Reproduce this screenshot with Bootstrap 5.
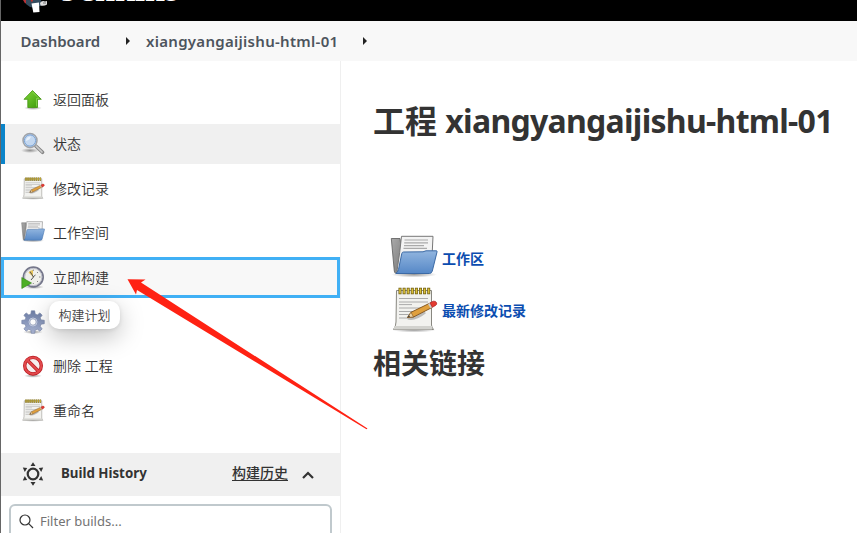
<!DOCTYPE html>
<html lang="zh-CN">
<head>
<meta charset="utf-8">
<meta name="viewport" content="width=device-width, initial-scale=1">
<title>xiangyangaijishu-html-01 [Jenkins]</title>
<link href="https://cdn.jsdelivr.net/npm/bootstrap@5.3.0/dist/css/bootstrap.min.css" rel="stylesheet">
<style>
body{font-family:"Noto Sans","Noto Sans CJK SC",sans-serif;font-size:14px;line-height:20px;color:#333;height:533px;border-left:1px solid #666;overflow:hidden}
.top-bar{height:21px;background:#000;overflow:hidden}
.top-bar .logo-pic{width:32px;height:21px;margin-left:16px}
.brand-word{font:bold 36px/36px "Liberation Serif",serif;color:#fff;margin:-29px 0 0 12px;height:36px;width:115px}
.crumbs{height:40px;background:#f8f8f8;font-weight:600;color:#4d545d;font-size:15px;padding-left:19.500px}
.crumb-a{width:81.500px}.crumb-b{width:193px;white-space:nowrap;letter-spacing:.29px}
.tri{width:0;height:0;border:4px solid transparent;border-left-color:#222;border-right:0}
.side-panel{width:340px;border-right:1px solid #efefef;height:472px}
.tasks{padding-top:18.5px;height:392px}
.task{height:40.45px;margin-bottom:4px;padding-left:20px;width:339px;font-weight:350}
.task svg{width:24px;height:24px;margin-right:8px;flex:none}
.task.current{background:#f0f0f0;border-left:4px solid #0b84c9;padding-left:16px}
.task.focused{background:#f8f8f8;border:3px solid #40b0f5;padding-left:17px}
.task.focused span{padding-top:1px}
.tip{left:48px;top:301px;width:71px;height:28px;border-radius:10px;background:#fff;box-shadow:0 8px 24px rgba(0,0,0,.25),0 1px 4px rgba(0,0,0,.1);font-size:13px;font-weight:350;line-height:28px;color:#444}
.arrow{left:0;top:0;pointer-events:none}
.history-head{height:43px;background:#f0f0f0;padding-left:21px}
.history-title{font-weight:700;font-size:13.3px;margin:-3px 0 0 17px;width:171px}
.history-link{font-weight:500;text-decoration:underline;text-underline-offset:2px;margin-top:-3px}
.filter-box{margin:8px 8px 0;width:323px;height:36px;border:2px solid #c0c9cd;border-radius:6px;color:#737373;padding-left:8px}
.filter-hint{font-size:13px;margin-top:-2px}
.main-part{padding:0 0 0 32px}
.page-title{font-size:32px;font-weight:700;line-height:40px;margin:40px 0 92px;white-space:nowrap}
.page-title span{letter-spacing:-.72px}
.link-row{height:52px;padding-left:17px;color:#0b4db0;font-weight:700}
.link-row svg{width:48px;height:48px;margin-right:4px}
.link-row span{margin-top:-1px}
.sub-title{font-size:28px;font-weight:700;line-height:36px;margin:8px 0 0}
</style>
<script src="https://cdn.jsdelivr.net/npm/bootstrap@5.3.0/dist/js/bootstrap.bundle.min.js"></script>
</head>
<body class="m-0 bg-white position-relative">
<svg width="0" height="0" class="position-absolute">
<defs>
<linearGradient id="gBlue" x2="0" y2="1"><stop stop-color="#91b5df"/><stop offset="1" stop-color="#5688c7"/></linearGradient>
<linearGradient id="gGreen" x2="1" y2="1"><stop stop-color="#83d83b"/><stop offset="1" stop-color="#389609"/></linearGradient>
<linearGradient id="gGray" x2="1" y2="1"><stop stop-color="#aaa"/><stop offset="1" stop-color="#777"/></linearGradient>
<linearGradient id="gGear" x2="0" y2="1"><stop stop-color="#6c7da5"/><stop offset="1" stop-color="#a9b4d2"/></linearGradient>
<radialGradient id="gShade"><stop stop-color="#000" stop-opacity=".4"/><stop offset="1" stop-color="#000" stop-opacity="0"/></radialGradient>
<symbol id="folder" viewBox="0 0 48 48">
<ellipse cx="24" cy="39.5" rx="23" ry="3" fill="url(#gShade)"/>
<path d="M1.3 3.5H10L14 38H5.5Q4.5 38 4.3 36Z" fill="url(#gGray)" stroke="#666" stroke-width=".9"/>
<path d="M11.5 1.3H43L42 22 36 36H7Q10 17 11.5 1.3Z" fill="#f3f3f3" stroke="#777"/>
<path d="M14.500 5H38M14.200 7.800H38M14 10.600H34M13.500 13.400H37" stroke="#aaa" stroke-width="1.200"/>
<path d="M11.800 18.500Q12.200 17 13.500 17L33 16.800 36 15.800H46.500Q47.300 15.800 47 17L42.300 36Q41.500 38.500 39.500 38.500H5.800Q8 37 8.500 34.500Z" fill="url(#gBlue)" stroke="#3c6aa5"/>
</symbol>
<symbol id="notepad" viewBox="0 0 48 48">
<ellipse cx="24" cy="43" rx="22" ry="2.500" fill="url(#gShade)"/>
<path d="M6.500 3.500H41.500V38Q41.500 40 43.500 42.500H3.500Q6 39 6 35Z" fill="#f2f2ef" stroke="#888780"/>
<path d="M4.500 39H42V42.500H3.500Z" fill="#d2d2ce"/>
<path d="M9 11.500H38M9 15H38M9 17.600H22M9 21H36M9 24.500H33M9 27.500H27M9 31H18" stroke="#aaa" stroke-width="1"/>
<path d="M8.500 4H41" stroke="#6c5b10" stroke-width="6.500" stroke-dasharray="3 1.100"/>
<path d="M9.200 4H41" stroke="#dbc038" stroke-width="4.800" stroke-dasharray="1.600 2.500"/>
<path d="M18 31Q25 33 35 25" stroke="#555" opacity=".35" stroke-width="3" fill="none"/>
<path d="M17.500 30.500 21 25.300 39.500 16.300 42 20.500 23.500 30Z" fill="#e0a03d" stroke="#7d501c" stroke-width=".9"/>
<path d="M17.500 30.500 21 25.300 23.500 30Z" fill="#edd4a4" stroke="#7d501c" stroke-width=".6"/>
<path d="M17.500 30.500 19 28.300 20 29.800Z" fill="#333"/>
<path d="M38 17 40 16 42.500 20 40.500 21.300Z" fill="#ccc"/>
<path d="M40 15.800 43.300 14.200Q46 13.800 46.700 16 47 17.500 45.500 18.500L42.300 20.300Z" fill="#e33b30" stroke="#a92020" stroke-width=".7"/>
</symbol>
</defs>
</svg>

<header class="top-bar d-flex">
<svg class="logo-pic" viewBox="17 0 32 21"><path d="M23 0H28L27 4Q24 3 23 0Z" fill="#b83236"/><path d="M26 0H41L42 5 36 8 30 7 26 4Z" fill="#334b5d"/><path d="M30.500 0H33L32 2.500Z" fill="#c3312f"/><path d="M31.500 3.500 39 2.500 39.500 12 33.300 12.500Z" fill="#fff"/><path d="M40 3Q42 0 45 1.500L47 1V4.500Q44 6.500 40.500 5.500Z" fill="#ddd"/><path d="M43 3H46" stroke="#777"/></svg>
<div class="brand-word">Jenkins</div>
</header>
<nav class="crumbs d-flex align-items-center">
<span class="crumb-a">Dashboard</span><i class="tri" style="margin:0 16px 0 24px"></i><span class="crumb-b">xiangyangaijishu-html-01</span><i class="tri" style="margin-left:24px"></i>
</nav>

<div class="d-flex">
<aside class="side-panel flex-shrink-0">
<div class="tasks">
<div class="task d-flex align-items-center"><svg viewBox="0 0 24 24"><ellipse cx="12" cy="20" rx="9" ry="2" fill="url(#gShade)"/><path d="M11.500 2.500 20.300 11.300H16.500V19.500H6.800V11.300H3Z" fill="url(#gGreen)" stroke="#42940f" stroke-width=".8"/><path d="M11.500 4 18 10.500H15.500V18.500" fill="none" stroke="#9be565" stroke-width=".6"/></svg><span>返回面板</span></div>
<div class="task current d-flex align-items-center"><svg viewBox="0 0 24 24"><ellipse cx="9" cy="18.500" rx="9" ry="2.500" fill="url(#gShade)"/><path d="M14.500 13.800 21.500 20.300" stroke="#858585" stroke-width="3.600" stroke-linecap="round"/><path d="M15 14 21 20" stroke="#ccc" stroke-width="1.700" stroke-linecap="round"/><circle cx="9" cy="8.500" r="7" fill="#c4d8f0" stroke="#a0a3a8" stroke-width="1.500"/><circle cx="9" cy="8.500" r="5.600" fill="none" stroke="#7ba4d6"/><path d="M5 9Q5 4.500 10 4.500 9 8 5 9Z" fill="#e7f1fc"/></svg><span>状态</span></div>
<div class="task d-flex align-items-center"><svg><use href="#notepad"/></svg><span>修改记录</span></div>
<div class="task d-flex align-items-center"><svg><use href="#folder"/></svg><span>工作空间</span></div>
<div class="task focused d-flex align-items-center"><svg viewBox="0 0 24 24"><ellipse cx="13" cy="22" rx="10" ry="2" fill="url(#gShade)"/><circle cx="12.300" cy="12" r="9.800" fill="#f0f0eb" stroke="#74768a" stroke-width="1.800"/><circle cx="12.300" cy="12" r="8.600" fill="none" stroke="#bbbcc8"/><path d="M12 12 7.500 7.500Q9 5 12 5Z" fill="#e9c55b"/><path d="M9 6.500 12.500 12 10 15M12 12 14.500 10" stroke="#555" fill="none"/><path d="M12.300 4.500V6M19.500 12H18M12.300 19V18M17 7 16 8M17 17 16 16" stroke="#888"/><path d="M.8 12.500 10.500 18 .8 23.500Z" fill="#4daf25" stroke="#328116" stroke-width=".6"/></svg><span>立即构建</span></div>
<div class="task d-flex align-items-center"><svg viewBox="0 0 24 24"><ellipse cx="12" cy="22" rx="10" ry="2" fill="url(#gShade)"/><g fill="url(#gGear)" stroke="#7280a2" stroke-width=".6"><path fill-rule="evenodd" d="M10.300.8H13.700L14.200 4 16.300 4.900 18.900 2.900 21.200 5.200 19.200 7.800 20.100 9.900 23.300 10.300V13.700L20.100 14.200 19.200 16.300 21.200 18.900 18.900 21.200 16.300 19.200 14.200 20.100 13.700 23.300H10.300L9.900 20.100 7.800 19.200 5.200 21.200 2.900 18.900 4.900 16.300 4 14.200.8 13.700V10.300L4 9.900 4.900 7.800 2.900 5.200 5.200 2.900 7.800 4.900 9.900 4ZM12 8.800A3.200 3.200 0 1 0 12 15.200 3.200 3.200 0 1 0 12 8.800Z"/></g><circle cx="12" cy="12" r="4" fill="none" stroke="#c4cce0"/></svg></div>
<div class="task d-flex align-items-center"><svg viewBox="0 0 24 24"><ellipse cx="12" cy="21.800" rx="9" ry="2" fill="url(#gShade)"/><circle cx="12" cy="11.700" r="8.300" fill="#f5eeee" stroke="#b91c22" stroke-width="3.400"/><path d="M6 5.700 18 17.700" stroke="#b91c22" stroke-width="3.400"/><circle cx="12" cy="11.700" r="8.300" fill="none" stroke="#e2494c" stroke-width="2"/><path d="M6 5.700 18 17.700" stroke="#e2494c" stroke-width="2"/></svg><span>删除 工程</span></div>
<div class="task d-flex align-items-center"><svg><use href="#notepad"/></svg><span>重命名</span></div>
</div>
<div class="history-head d-flex align-items-center">
<svg width="22" height="24" viewBox="0 0 22 24" style="margin-top:-1px"><circle cx="11" cy="12" r="5.300" fill="none" stroke="#333" stroke-width="2.200"/><path d="M11 .3 13.500 4H8.500ZM11 23.700 13.500 20H8.500ZM.8 5.500 5.200 6 2.800 10ZM21.200 5.500 16.800 6 19.200 10ZM.8 18.500 5.200 18 2.800 14ZM21.200 18.500 16.800 18 19.200 14Z" fill="#333"/></svg>
<span class="history-title">Build History</span><span class="history-link">构建历史</span>
<svg width="12" height="8" viewBox="0 0 12 8" style="margin:1px 0 0 14px"><path d="M1 7 6 2 11 7" fill="none" stroke="#333" stroke-width="2.200"/></svg>
</div>
<div class="filter-box d-flex align-items-center"><svg width="15" height="15" viewBox="0 0 15 15" style="margin:-2px 6px 0 0"><circle cx="6" cy="6" r="5" fill="none" stroke="#333" stroke-width="1.200"/><path d="M9.700 9.700 14 14" stroke="#333" stroke-width="1.200"/></svg><span class="filter-hint">Filter builds...</span></div>
</aside>
<main class="main-part flex-grow-1">
<h1 class="page-title">工程 <span>xiangyangaijishu-html-01</span></h1>
<div class="link-row d-flex align-items-center"><svg><use href="#folder"/></svg><span>工作区</span></div>
<div class="link-row d-flex align-items-center"><svg><use href="#notepad"/></svg><span>最新修改记录</span></div>
<h2 class="sub-title">相关链接</h2>
</main>
</div>
<div class="tip position-absolute text-center">构建计划</div>
<svg class="arrow position-absolute" width="400" height="440" viewBox="1 0 400 440"><path d="M127.500 279.300 145.500 279.500 141 282.500 367.500 428.500 366.500 429.200 137 290 136 294.500Z" fill="#ff2213"/></svg>
</body>
</html>
